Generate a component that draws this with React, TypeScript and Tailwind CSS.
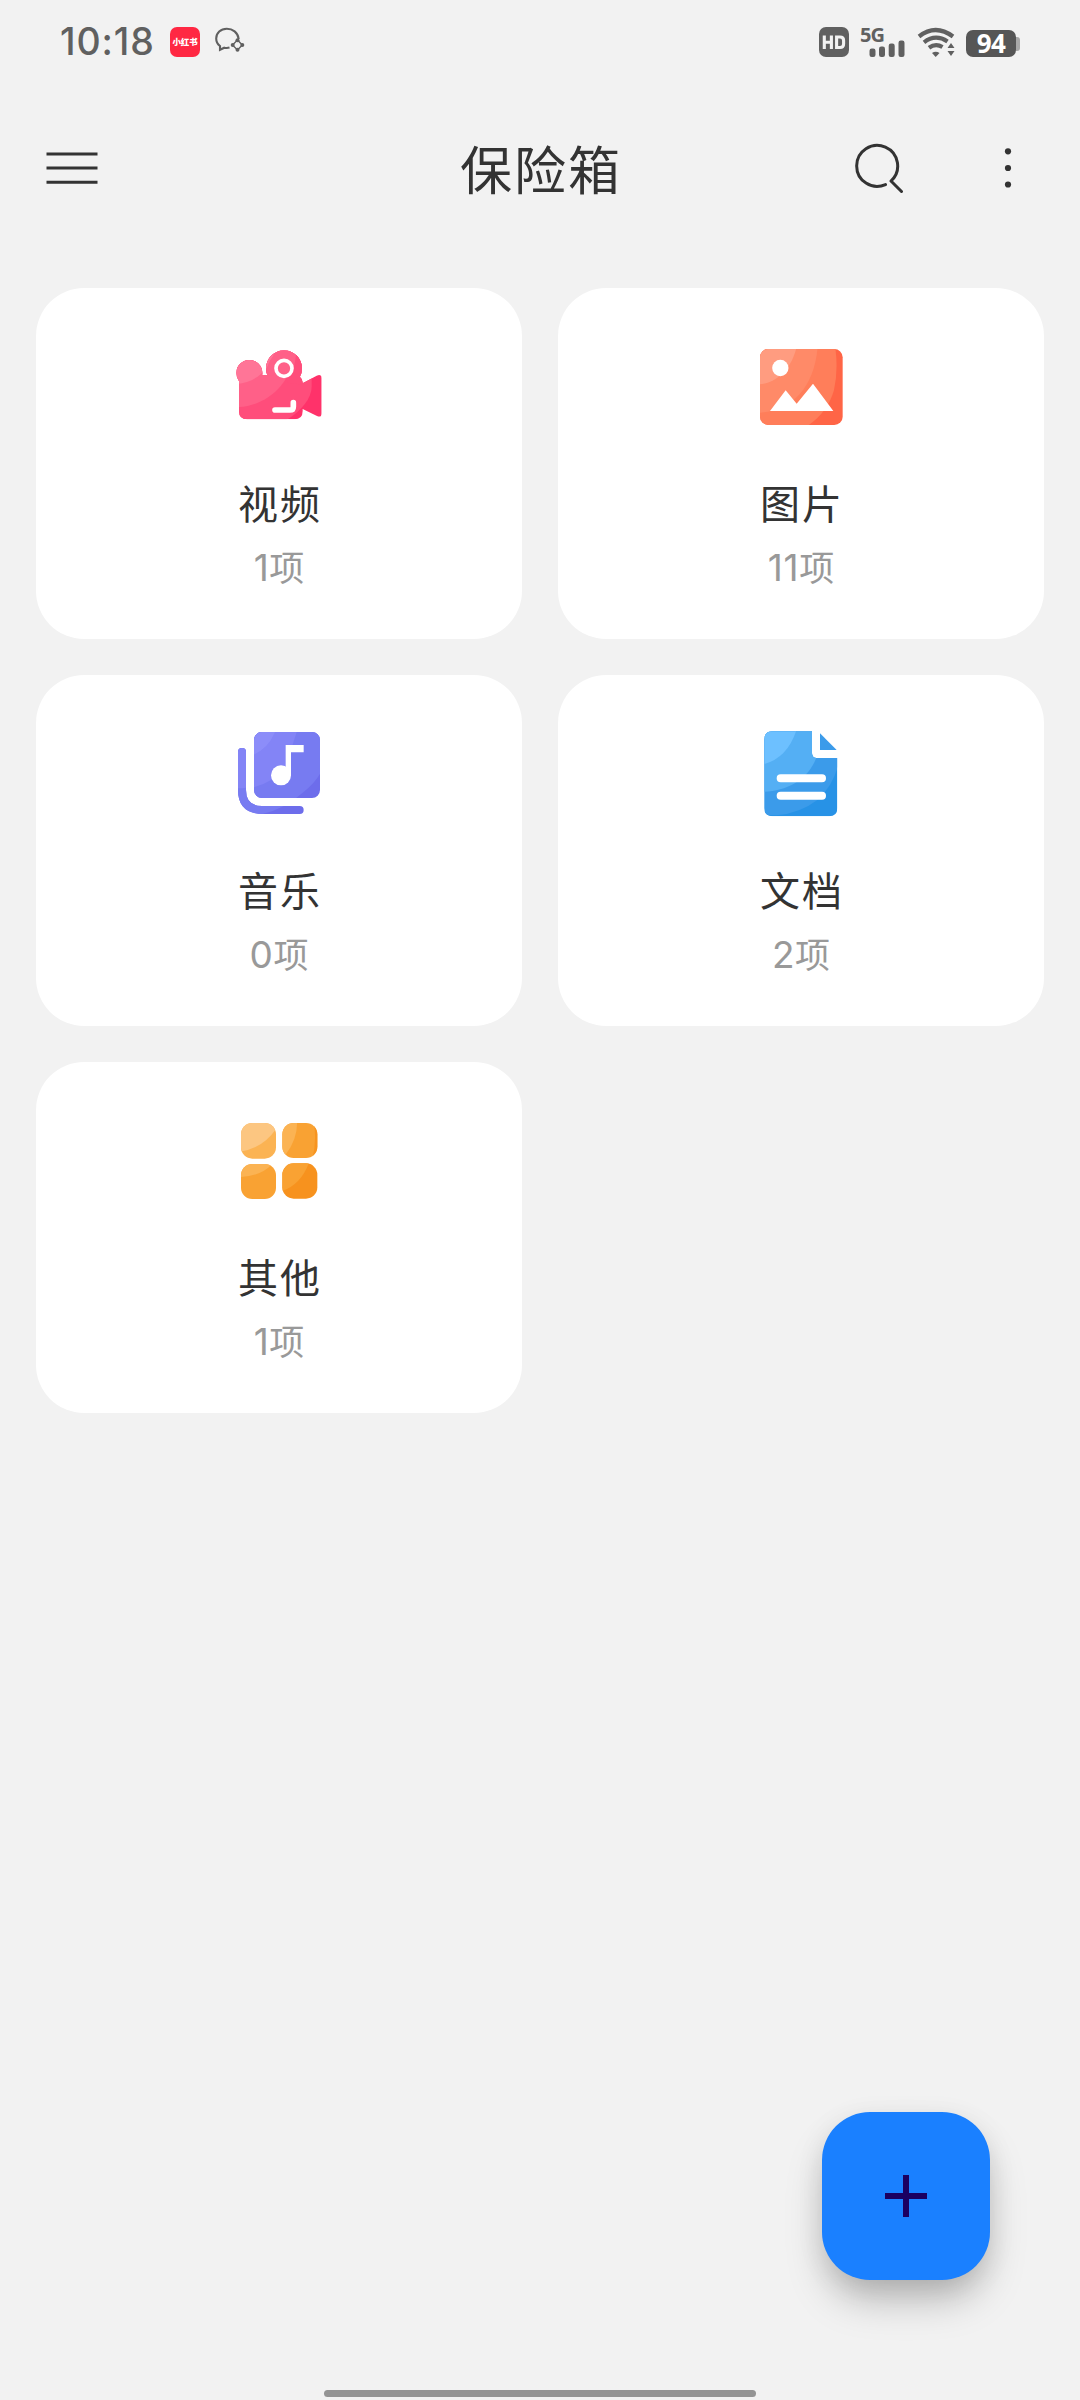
import type { ReactNode } from "react";

const VideoIcon = () => (
  <svg className="size-[120px]" viewBox="-3 0 360 360">
    <defs>
      <clipPath id="video">
        <circle cx="88" cy="129" r="39" />
        <circle cx="192" cy="115" r="54" />
        <path d="M57 135H220Q248 135 248 163V243Q248 268 223 268H82Q57 268 57 243Z" />
        <path d="M248 160L290 137Q305 131 305 145V250Q305 264 291 258L248 237Z" />
      </clipPath>
    </defs>
    <g clipPath="url(#video)">
      <rect width="360" height="360" fill="#ff326a" />
      <path d="M0 0H275V170C275 206 240 248 190 275H0Z" fill="#ff4d7b" />
      <path d="M0 0H230C236 150 150 225 57 231H0Z" fill="#ff6088" />
      <path d="M0 0H173C170 105 120 155 50 162H0Z" fill="#ff7597" />
      <path d="M126 135H139Q141 84 180 64H250V135L139 138Z" fill="#ff6088" />
      <path d="M228 74Q224 120 201 158L255 165V75Z" fill="#ff4d7b" />
    </g>
    <circle cx="192" cy="115" r="24" fill="none" stroke="#fff" strokeWidth="11" />
    <path d="M165 240H210Q220 240 220 230V218" fill="none" stroke="#fff" strokeWidth="17" strokeLinecap="round" />
  </svg>
);

const PictureIcon = () => (
  <svg className="size-[120px]" viewBox="3 0 360 360">
    <defs>
      <clipPath id="picture"><rect x="60" y="57" width="248" height="228" rx="25" /></clipPath>
    </defs>
    <g clipPath="url(#picture)">
      <rect width="360" height="360" fill="#ff6546" />
      <path d="M0 0H276Q300 100 282 180Q264 245 205 286H0Z" fill="#ff7e5a" />
      <path d="M0 0H234C240 150 170 242 60 248H0Z" fill="#ff8a68" />
      <path d="M0 0H176C174 100 120 157 60 163H0Z" fill="#ff9c80" />
    </g>
    <circle cx="121" cy="114" r="24.5" fill="#fff" />
    <path d="M90 243L137 181L170 221L219 161L280 243Z" fill="#fff" />
  </svg>
);

const MusicIcon = () => (
  <svg className="size-[120px]" viewBox="-3 6 360 360">
    <defs>
      <clipPath id="music">
        <rect x="102" y="51" width="198" height="198" rx="24" />
        <path d="M54 111A12 12 0 0 1 78 111V225Q78 273 126 273H239A12 12 0 0 1 239 297H130Q54 297 54 225Z" />
      </clipPath>
    </defs>
    <g clipPath="url(#music)">
      <rect width="360" height="360" fill="#6d6deb" />
      <path d="M0 0H310V150Q302 190 250 232Q185 290 110 300H0Z" fill="#777bf1" />
      <path d="M0 0H226C226 125 150 219 54 220H0Z" fill="#8384f6" />
      <path d="M102 51H168Q145 100 102 119Z" fill="#8c8df9" />
      <path d="M102 217Q158 202 195 160L230 51H165Q145 100 102 119Z" fill="#8384f6" />
    </g>
    <circle cx="183" cy="181" r="30" fill="#fff" />
    <path d="M197 90H251V112H213V181H197Z" fill="#fff" />
  </svg>
);

const DocumentIcon = () => (
  <svg className="size-[120px]" viewBox="3 6 360 360">
    <defs>
      <clipPath id="document">
        <path d="M98 49H216V115Q216 129 230 129H292V279Q292 304 267 304H98Q73 304 73 279V74Q73 49 98 49Z" />
      </clipPath>
    </defs>
    <g clipPath="url(#document)">
      <rect width="360" height="360" fill="#2792e6" />
      <path d="M0 0H300V129Q284 210 232 255Q180 295 110 301H0Z" fill="#3b9bea" />
      <path d="M0 0H230V125C208 190 145 228 73 230H0Z" fill="#54aff4" />
      <path d="M0 0H180Q160 123 73 147H0Z" fill="#6dc0ff" />
    </g>
    <path d="M240 55L290 105H240Z" fill="#3b9bea" />
    <path d="M122 190H246M122 242H246" stroke="#fff" strokeWidth="24" strokeLinecap="round" />
  </svg>
);

const OtherIcon = () => (
  <svg className="size-[120px]" viewBox="-3 12 360 360">
    <defs>
      <clipPath id="tile-a"><rect x="63" y="69" width="105" height="107" rx="34" /></clipPath>
      <clipPath id="tile-b"><rect x="187" y="69" width="105" height="105" rx="34" /></clipPath>
      <clipPath id="tile-c"><rect x="63" y="192" width="105" height="105" rx="34" /></clipPath>
      <clipPath id="tile-d"><rect x="187" y="190" width="105" height="106" rx="34" /></clipPath>
    </defs>
    <g clipPath="url(#tile-a)">
      <path d="M60 60H170V180H60Z" fill="#fbb353" />
      <path d="M60 60H170V84Q130 145 60 155Z" fill="#fcc681" />
    </g>
    <g clipPath="url(#tile-b)">
      <path d="M180 60H300V180H180Z" fill="#f9a233" />
      <path d="M180 60H231Q234 115 198 162L180 170Z" fill="#fbb353" />
      <path d="M280 60Q292 120 276 180H300V60Z" fill="#f79420" />
    </g>
    <g clipPath="url(#tile-c)">
      <path d="M60 185H170V300H60Z" fill="#f9a233" />
      <path d="M60 185H162Q130 228 60 231Z" fill="#fbb353" />
    </g>
    <g clipPath="url(#tile-d)">
      <path d="M180 185H300V300H180Z" fill="#f7921e" />
      <path d="M180 185H268Q245 252 187 273Z" fill="#f9a233" />
    </g>
  </svg>
);

const Card = ({ icon, name, count }: { icon: ReactNode; name: string; count: number }) => (
  <div className="flex h-[351px] flex-col items-center rounded-[48px] bg-white pt-[42px]">
    {icon}
    <div className="mt-[24px] pl-0.5 text-[40px] leading-[60px] tracking-[2px] text-[#333]">{name}</div>
    <div className="mt-[8px] flex items-baseline leading-[52px] text-[#999]">
      <span className="font-['Inter',sans-serif] text-[37px] tracking-[0.6px]">{count}</span>
      <span className="text-[35px]">项</span>
    </div>
  </div>
);

const StatusBar = () => (
  <header className="flex h-[84px] items-center justify-between pr-[60px] pl-[60px] text-[#606060]">
    <div className="flex items-center">
      <span className="w-[110px] font-['Inter',sans-serif] text-[37.5px] leading-[84px] font-medium tracking-[0.9px]">10:18</span>
      <span className="flex size-[30px] items-center justify-center rounded-[7px] bg-[#ff2843] text-[8.5px] font-black tracking-[-0.2px] whitespace-nowrap text-white">小红书</span>
      <svg className="ml-[15px] size-[30px]" viewBox="0 0 30 30" fill="none" stroke="currentColor" strokeWidth="2.1">
        <path d="M23.7 12C23 5.5 17.5 1.7 11.8 1.7C5.7 1.7 1.2 6 1.2 11.5C1.2 14.7 2.7 17.3 5 19V22.8L9.3 20.7Q12 21.3 14.5 20.6" />
        <path d="M22.5 13L27.3 18L22.5 23L17.5 18Z" strokeWidth="1.4" />
        <g fill="currentColor" stroke="none">
          <circle cx="22.5" cy="13.2" r="2" /><circle cx="27.3" cy="18" r="2" /><circle cx="22.5" cy="22.8" r="2" /><circle cx="17.7" cy="18" r="2" />
        </g>
      </svg>
    </div>
    <div className="flex items-center">
      <svg className="h-[30px] w-[30px]" viewBox="0 0 30 30">
        <rect width="30" height="30" rx="7" fill="#606060" />
        <path d="M5.3 8.5V22M12.4 8.5V22M5.3 15.2H12.4M17.6 10H21Q24.6 10 24.6 13.5V17Q24.6 20.5 21 20.5H17.6Z" fill="none" stroke="#f2f2f2" strokeWidth="3.1" />
      </svg>
      <div className="relative ml-[11px] h-[30px] w-[45px]">
        <span className="absolute top-[-1px] left-0 text-[20px] leading-[17px] font-bold tracking-[-1px]">5G</span>
        <svg className="absolute right-0 bottom-0 h-[17px] w-[36px]" viewBox="0 0 36 17" fill="currentColor">
          <rect x="0.5" y="8.5" width="6" height="8.5" rx="2.2" /><rect x="10" y="6.5" width="6" height="10.5" rx="2.2" />
          <rect x="19.7" y="3.5" width="6" height="13.5" rx="2.2" /><rect x="29.5" y="0.5" width="6" height="16.5" rx="2.2" />
        </svg>
      </div>
      <svg className="ml-3 h-[30px] w-[38px]" viewBox="0 0 38 30" fill="none" stroke="currentColor">
        <path d="M2 9.5Q18.5 -3.5 36 9.5M7 15.3Q18.5 6.5 30.5 14.5M12 20.8Q18.5 16 25.5 20" strokeWidth="4.2" />
        <path d="M15 26Q18.7 23.5 22.5 26L18.7 30Z" fill="currentColor" stroke="none" />
        <path d="M30.5 21H37.5L34 16ZM30.5 24H37.5L34 29Z" fill="currentColor" stroke="none" />
      </svg>
      <div className="mt-[3px] ml-[11px] flex items-center">
        <div className="flex h-[27px] w-[50px] items-center justify-center rounded-[7px] bg-[#565656] text-[26px] leading-[27px] font-bold tracking-[-0.5px] text-white">94</div>
        <div className="h-[14px] w-[4px] rounded-r-[3px] bg-[#a8a8a8]" />
      </div>
    </div>
  </header>
);

export default function App() {
  return (
    <div className="relative flex h-[2400px] w-[1080px] flex-col overflow-hidden bg-[#f2f2f2] font-['Noto_Sans','Noto_Sans_CJK_SC',sans-serif]">
      <StatusBar />
      <nav className="grid h-[168px] grid-cols-[1fr_auto_1fr] items-center text-[#333]">
        <svg className="ml-[46px] h-[32px] w-[52px]" viewBox="0 0 52 32" stroke="currentColor" strokeWidth="3">
          <path d="M0.5 2H51.5M0.5 16H51.5M0.5 30.3H51.5" />
        </svg>
        <h1 className="pt-[3px] pl-0.5 text-[52px] leading-[80px] tracking-[2px]">保险箱</h1>
        <div className="flex items-center justify-end pr-[66px]">
          <svg className="mt-px size-[52px]" viewBox="0 0 52 52" fill="none" stroke="currentColor" strokeWidth="3" strokeLinecap="round">
            <path d="M32.5 41.6A20.5 20.5 0 1 1 38 38L48.5 48.5" strokeLinejoin="round" />
          </svg>
          <svg className="ml-[97px] h-[44px] w-[12px]" viewBox="0 0 12 44" fill="currentColor">
            <circle cx="6" cy="5.3" r="3.1" /><circle cx="6" cy="22" r="3.1" /><circle cx="6" cy="38.5" r="3.1" />
          </svg>
        </div>
      </nav>
      <main className="mt-[36px] grid grid-cols-2 gap-[36px] px-[36px]">
        <Card icon={<VideoIcon />} name="视频" count={1} />
        <Card icon={<PictureIcon />} name="图片" count={11} />
        <Card icon={<MusicIcon />} name="音乐" count={0} />
        <Card icon={<DocumentIcon />} name="文档" count={2} />
        <Card icon={<OtherIcon />} name="其他" count={1} />
      </main>
      <button className="absolute right-[90px] bottom-[120px] flex size-[168px] items-center justify-center rounded-[48px] bg-[#1a80ff] shadow-[0_24px_40px_-6px_rgba(0,0,0,0.26),0_6px_28px_rgba(0,0,0,0.08)]">
        <svg className="size-[42px]" viewBox="0 0 42 42" stroke="#1b0061" strokeWidth="6"><path d="M21 0V42M0 21H42" /></svg>
      </button>
      <div className="absolute bottom-[3px] left-[324px] h-[7px] w-[432px] rounded-full bg-[#949494]" />
    </div>
  );
}
